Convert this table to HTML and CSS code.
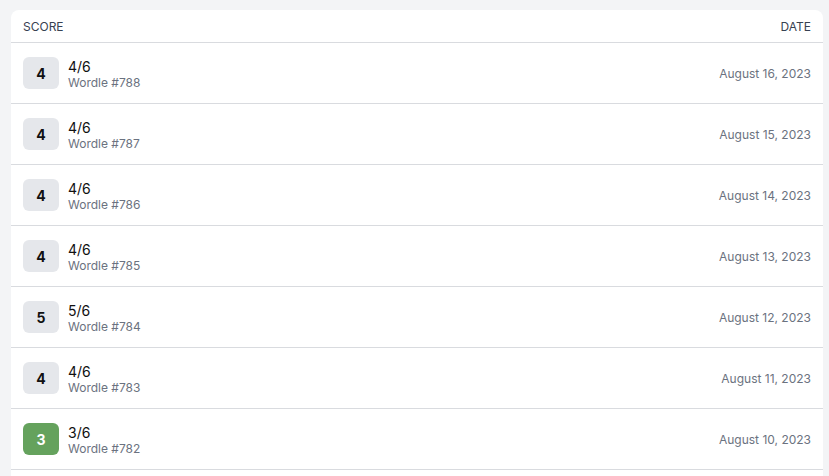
FILE: index.html
```html
<!DOCTYPE html>
<html lang="en">
<head>
<meta charset="utf-8">
<title>Wordle scores</title>
<link rel="stylesheet" href="styles.css">
</head>
<body>
<div class="card">
  <div class="head">
    <span>Score</span>
    <span>Date</span>
  </div>
  <div class="row">
    <div class="score"><span class="badge">4</span><div class="info"><div class="frac">4/6</div><div class="name">Wordle #788</div></div></div>
    <div class="date">August 16, 2023</div>
  </div>
  <div class="row">
    <div class="score"><span class="badge">4</span><div class="info"><div class="frac">4/6</div><div class="name">Wordle #787</div></div></div>
    <div class="date">August 15, 2023</div>
  </div>
  <div class="row">
    <div class="score"><span class="badge">4</span><div class="info"><div class="frac">4/6</div><div class="name">Wordle #786</div></div></div>
    <div class="date">August 14, 2023</div>
  </div>
  <div class="row">
    <div class="score"><span class="badge">4</span><div class="info"><div class="frac">4/6</div><div class="name">Wordle #785</div></div></div>
    <div class="date">August 13, 2023</div>
  </div>
  <div class="row">
    <div class="score"><span class="badge">5</span><div class="info"><div class="frac">5/6</div><div class="name">Wordle #784</div></div></div>
    <div class="date">August 12, 2023</div>
  </div>
  <div class="row">
    <div class="score"><span class="badge">4</span><div class="info"><div class="frac">4/6</div><div class="name">Wordle #783</div></div></div>
    <div class="date">August 11, 2023</div>
  </div>
  <div class="row">
    <div class="score"><span class="badge green">3</span><div class="info"><div class="frac">3/6</div><div class="name">Wordle #782</div></div></div>
    <div class="date">August 10, 2023</div>
  </div>
</div>
</body>
</html>
```
FILE: styles.css
```css
html, body {
  margin: 0;
  background: #f3f4f6;
  overflow: hidden;
}
body {
  padding: 10px 6px 0 11px;
  font-family: Inter, "Liberation Sans", sans-serif;
}
.card {
  background: #ffffff;
  border-radius: 8px 8px 0 0;
  padding-bottom: 20px;
}
.head {
  display: flex;
  justify-content: space-between;
  align-items: center;
  height: 32px;
  padding: 0 12px;
  border-bottom: 1px solid #d9dbdf;
  font-size: 12px;
  text-transform: uppercase;
  color: #374151;
}
.row {
  display: flex;
  justify-content: space-between;
  align-items: center;
  height: 32px;
  padding: 14px 12px;
  border-bottom: 1px solid #d9dbdf;
}
.score {
  display: flex;
  align-items: center;
  gap: 9px;
}
.badge {
  width: 36px;
  height: 32px;
  border-radius: 6px;
  background: #e5e7eb;
  display: flex;
  align-items: center;
  justify-content: center;
  font-size: 14px;
  font-weight: 700;
  color: #111111;
}
.badge.green {
  background: #65a25d;
  color: #ffffff;
}
.info {
  display: flex;
  flex-direction: column;
  margin-top: 4px;
}
.frac {
  font-size: 14px;
  line-height: 16px;
  color: #111111;
}
.name {
  font-size: 12px;
  line-height: 16px;
  color: #6b7280;
}
.date {
  font-size: 12px;
  color: #6b7280;
}
```
